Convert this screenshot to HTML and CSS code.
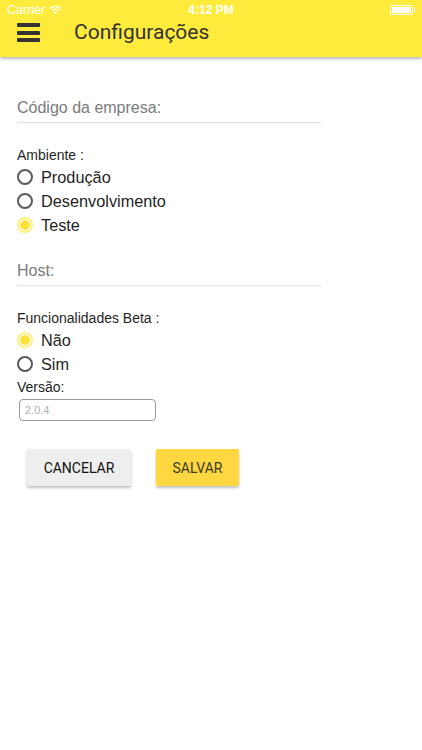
FILE: index.html
```html
<!DOCTYPE html>
<html lang="pt">
<head>
<meta charset="utf-8">
<title>Configurações</title>
<link rel="stylesheet" href="styles.css">
</head>
<body>
<header class="appbar">
  <div class="statusbar">
    <div class="sb-left">
      <span class="carrier">Carrier</span>
      <svg class="wifi" width="13" height="10" viewBox="0 0 13 10">
        <path d="M6.5 9.5 L4.6 7.4 A2.8 2.8 0 0 1 8.4 7.4 Z" fill="#fff"/>
        <path d="M2.9 5.6 A5.2 5.2 0 0 1 10.1 5.6" stroke="#fff" stroke-width="1.5" fill="none"/>
        <path d="M0.9 3.5 A8 8 0 0 1 12.1 3.5" stroke="#fff" stroke-width="1.5" fill="none"/>
      </svg>
    </div>
    <div class="sb-time">4:12 PM</div>
    <div class="sb-right">
      <span class="battery"><span class="battery-fill"></span></span><span class="battery-tip"></span>
    </div>
  </div>
  <div class="toolbar">
    <div class="menu-icon"><span></span><span></span><span></span></div>
    <h1 class="title">Configurações</h1>
  </div>
</header>

<main class="content">
  <div class="field"><span class="placeholder">Código da empresa:</span></div>

  <div class="label label-first">Ambiente :</div>
  <div class="radio-row"><span class="radio"></span><span class="radio-text">Produção</span></div>
  <div class="radio-row"><span class="radio"></span><span class="radio-text">Desenvolvimento</span></div>
  <div class="radio-row"><span class="radio radio-on"></span><span class="radio-text">Teste</span></div>

  <div class="field field-host"><span class="placeholder">Host:</span></div>

  <div class="label label-first">Funcionalidades Beta :</div>
  <div class="radio-row"><span class="radio radio-on"></span><span class="radio-text">Não</span></div>
  <div class="radio-row"><span class="radio"></span><span class="radio-text">Sim</span></div>

  <div class="label label-version">Versão:</div>
  <div class="version-box">2.0.4</div>

  <div class="buttons">
    <button class="btn btn-cancel">CANCELAR</button>
    <button class="btn btn-save">SALVAR</button>
  </div>
</main>
</body>
</html>
```

FILE: styles.css
```css
html, body {
  margin: 0;
  padding: 0;
  background: #ffffff;
}
body {
  width: 422px;
  height: 750px;
  overflow: hidden;
  font-family: "Liberation Sans", Arial, sans-serif;
  color: #1f1f1f;
}
.appbar {
  background: #ffeb3b;
  height: 57px;
  box-shadow: 0 2px 3px rgba(0, 0, 0, 0.28);
  position: relative;
}
.statusbar {
  height: 20px;
  display: flex;
  align-items: center;
  justify-content: space-between;
  padding: 0 7px;
  color: #ffffff;
  font-size: 12px;
  position: relative;
}
.sb-left {
  display: flex;
  align-items: center;
  gap: 4px;
}
.carrier {
  font-size: 12.5px;
}
.sb-time {
  position: absolute;
  left: 0;
  right: 0;
  text-align: center;
  font-weight: bold;
  font-size: 12px;
}
.sb-right {
  display: flex;
  align-items: center;
}
.battery {
  display: block;
  border: 1px solid #ffffff;
  border-radius: 2px;
  padding: 1px;
  box-sizing: border-box;
  width: 23px;
  height: 10px;
}
.battery-fill {
  display: block;
  width: 100%;
  height: 100%;
  background: #ffffff;
  border-radius: 1px;
}
.battery-tip {
  display: block;
  width: 1.5px;
  height: 4px;
  background: #ffffff;
  margin-left: 1px;
}
.toolbar {
  height: 37px;
  box-sizing: border-box;
  display: flex;
  align-items: flex-start;
  padding: 3px 0 0 17px;
}
.menu-icon {
  width: 23px;
  display: flex;
  flex-direction: column;
  gap: 3.5px;
}
.menu-icon span {
  display: block;
  height: 4px;
  background: #333333;
  border-radius: 1px;
}
.title {
  margin: -3px 0 0 34px;
  font-family: Roboto, "Liberation Sans", sans-serif;
  font-weight: normal;
  font-size: 21px;
  line-height: normal;
  color: #333333;
}
.content {
  padding: 37px 17px 0 17px;
}
.field {
  width: 304px;
  height: 28px;
  line-height: 28px;
  border-bottom: 1px solid #e6e6e6;
  box-shadow: 0 1px 1px rgba(0, 0, 0, 0.03);
}
.placeholder {
  font-size: 16px;
  color: #7a7a7a;
}
.field-host {
  margin-top: 20px;
}
.label {
  font-size: 14px;
  line-height: 20px;
  color: #1f1f1f;
}
.label-first {
  margin-top: 22px;
}
.radio-row {
  height: 24px;
  display: flex;
  align-items: center;
}
.radio {
  width: 16px;
  height: 16px;
  box-sizing: border-box;
  border: 2px solid #5a5a5a;
  border-radius: 50%;
  margin-right: 8px;
  flex: none;
}
.radio-on {
  border: 2px solid #fff178;
  background: radial-gradient(circle, #fde03a 0 4.5px, #ffffff 5px);
}
.radio-text {
  font-size: 16.3px;
  color: #1f1f1f;
}
.label-version {
  margin-top: 1px;
}
.version-box {
  margin: 2px 0 0 2px;
  width: 137px;
  height: 22px;
  box-sizing: border-box;
  border: 1px solid #9a9a9a;
  border-radius: 4px;
  font-size: 11px;
  line-height: 20px;
  padding-left: 5px;
  color: #b0b0b0;
}
.buttons {
  display: flex;
  gap: 25px;
  margin: 28px 0 0 10px;
}
.btn {
  height: 37px;
  border: none;
  border-radius: 2px;
  font-family: Roboto, "Liberation Sans", sans-serif;
  font-size: 14px;
  padding: 0 16px;
  box-shadow: 0 2px 3px rgba(0, 0, 0, 0.25);
}
.btn-cancel {
  background: #eeeeee;
  color: #111111;
  width: 104px;
}
.btn-save {
  background: #ffd740;
  color: #3a3a2a;
  width: 83px;
}
```
